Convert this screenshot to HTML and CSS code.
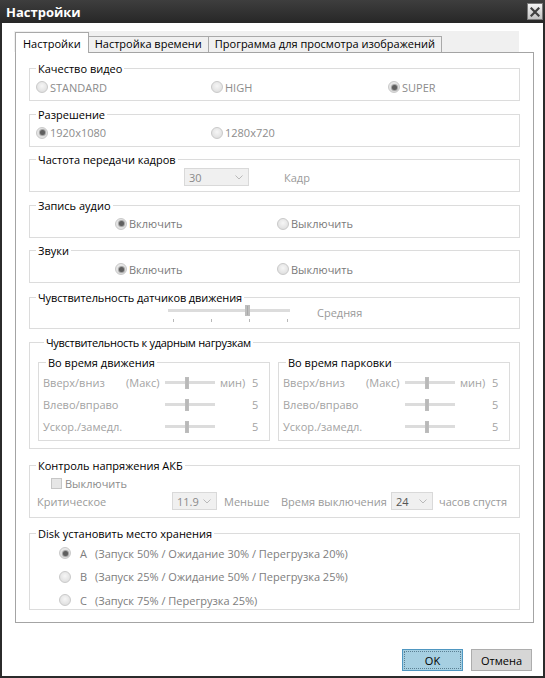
FILE: index.html
```html
<!DOCTYPE html>
<html lang="ru">
<head>
<meta charset="utf-8">
<title>Настройки</title>
<link rel="stylesheet" href="styles.css">
</head>
<body>
<div class="window">
  <div class="titlebar">
    <span class="title">Настройки</span>
    <span class="close"><svg width="10" height="10" viewBox="0 0 10 10"><path d="M1.5 1.5L8.5 8.5M8.5 1.5L1.5 8.5" stroke="#404040" stroke-width="2.2" stroke-linecap="square"/></svg></span>
  </div>
  <div class="client">
    <div class="tabstrip">
      <span class="tab active">Настройки</span>
      <span class="tab">Настройка времени</span>
      <span class="tab">Программа для просмотра изображений</span>
    </div>
    <div class="panel">
      <fieldset class="group">
        <legend>Качество видео</legend>
        <div class="row cols3">
          <span class="opt"><span class="radio"></span>STANDARD</span>
          <span class="opt"><span class="radio"></span>HIGH</span>
          <span class="opt"><span class="radio on"></span>SUPER</span>
        </div>
      </fieldset>
      <fieldset class="group">
        <legend>Разрешение</legend>
        <div class="row cols3">
          <span class="opt"><span class="radio on"></span>1920x1080</span>
          <span class="opt"><span class="radio"></span>1280x720</span>
        </div>
      </fieldset>
      <fieldset class="group g3">
        <legend>Частота передачи кадров</legend>
        <div class="row fps">
          <span class="select w65"><span>30</span><svg width="8" height="5" viewBox="0 0 8 5"><path d="M0.5 0.5L4 4L7.5 0.5" fill="none" stroke="#b9b9b9"/></svg></span>
          <span class="muted unit">Кадр</span>
        </div>
      </fieldset>
      <fieldset class="group">
        <legend>Запись аудио</legend>
        <div class="row cols2">
          <span class="opt dark"><span class="radio on"></span>Включить</span>
          <span class="opt dark"><span class="radio"></span>Выключить</span>
        </div>
      </fieldset>
      <fieldset class="group">
        <legend>Звуки</legend>
        <div class="row cols2">
          <span class="opt dark"><span class="radio on"></span>Включить</span>
          <span class="opt dark"><span class="radio"></span>Выключить</span>
        </div>
      </fieldset>
      <fieldset class="group g6">
        <legend class="tight1">Чувствительность датчиков движения</legend>
        <div class="sense">
          <div class="big-slider">
            <div class="track"></div>
            <div class="thumb big-thumb"></div>
            <div class="ticks"><i></i><i></i><i></i><i></i></div>
          </div>
          <span class="muted level">Средняя</span>
        </div>
      </fieldset>
      <fieldset class="group g7">
        <legend class="tight2">Чувствительность к ударным нагрузкам</legend>
        <div class="shock">
          <fieldset class="sub">
            <legend>Во время движения</legend>
            <div class="srow"><span>Вверх/вниз</span><span>(Макс)</span><span class="mini"><span class="track"></span><span class="thumb"></span></span><span>мин)</span><span>5</span></div>
            <div class="srow"><span>Влево/вправо</span><span></span><span class="mini"><span class="track"></span><span class="thumb"></span></span><span></span><span>5</span></div>
            <div class="srow"><span>Ускор./замедл.</span><span></span><span class="mini"><span class="track"></span><span class="thumb"></span></span><span></span><span>5</span></div>
          </fieldset>
          <fieldset class="sub">
            <legend>Во время парковки</legend>
            <div class="srow"><span>Вверх/вниз</span><span>(Макс)</span><span class="mini"><span class="track"></span><span class="thumb"></span></span><span>мин)</span><span>5</span></div>
            <div class="srow"><span>Влево/вправо</span><span></span><span class="mini"><span class="track"></span><span class="thumb"></span></span><span></span><span>5</span></div>
            <div class="srow"><span>Ускор./замедл.</span><span></span><span class="mini"><span class="track"></span><span class="thumb"></span></span><span></span><span>5</span></div>
          </fieldset>
        </div>
      </fieldset>
      <fieldset class="group g8">
        <legend>Контроль напряжения АКБ</legend>
        <div class="chkrow"><span class="check"></span><span class="opt">Выключить</span></div>
        <div class="batrow muted">
          <span>Критическое</span>
          <span class="select w45"><span>11.9</span><svg width="8" height="5" viewBox="0 0 8 5"><path d="M0.5 0.5L4 4L7.5 0.5" fill="none" stroke="#b9b9b9"/></svg></span>
          <span>Меньше</span>
          <span>Время выключения</span>
          <span class="select w42"><span class="dk">24</span><svg width="8" height="5" viewBox="0 0 8 5"><path d="M0.5 0.5L4 4L7.5 0.5" fill="none" stroke="#b9b9b9"/></svg></span>
          <span>часов спустя</span>
        </div>
      </fieldset>
      <fieldset class="group g9">
        <legend>Disk установить место хранения</legend>
        <div class="disk">
          <div class="drow"><span class="radio on"></span><span class="letter">A</span><span>(Запуск 50% / Ожидание 30% / Перегрузка 20%)</span></div>
          <div class="drow"><span class="radio"></span><span class="letter">B</span><span>(Запуск 25% / Ожидание 50% / Перегрузка 25%)</span></div>
          <div class="drow"><span class="radio"></span><span class="letter">C</span><span>(Запуск 75% / Перегрузка 25%)</span></div>
        </div>
      </fieldset>
    </div>
    <div class="buttons">
      <span class="btn primary">OK</span>
      <span class="btn">Отмена</span>
    </div>
  </div>
</div>
</body>
</html>
```

FILE: styles.css
```css
* { box-sizing: border-box; }
html, body { margin: 0; padding: 0; }
body {
  width: 545px;
  height: 678px;
  font-family: "Open Sans", "Noto Sans", sans-serif;
  font-size: 11px;
  color: #000;
  background: #fff;
  overflow: hidden;
}
.window {
  width: 545px;
  height: 678px;
  background: #2b2b2b;
  display: flex;
  flex-direction: column;
}
.titlebar {
  height: 23px;
  flex: none;
  display: flex;
  align-items: center;
  justify-content: space-between;
  padding: 0 2px 0 6px;
  background: linear-gradient(#3e3e3e, #272727);
}
.title {
  color: #fff;
  font-weight: 700;
  font-size: 13px;
  line-height: 16px;
}
.close {
  width: 16px;
  height: 17px;
  border: 1px solid #7a7a7a;
  background: linear-gradient(#f4f4f4, #c2c2c2);
  display: flex;
  align-items: center;
  justify-content: center;
}
.client {
  flex: 1;
  margin: 0 2px 2px 2px;
  background: #fff;
  display: flex;
  flex-direction: column;
}
.tabstrip {
  margin: 8px 0 0 12px;
  width: 505px;
  height: 21px;
  flex: none;
  background: #f0f0f0;
  display: flex;
  align-items: flex-end;
  padding-left: 1px;
}
.tab {
  height: 16px;
  line-height: 14px;
  padding: 0 6px;
  border: 1px solid #a9a9a9;
  border-bottom: none;
  background: #f0f0f0;
  margin-left: -1px;
  white-space: nowrap;
}
.tab:first-child { margin-left: 0; }
.tab.active {
  height: 21px;
  margin-bottom: -1px;
  padding: 4px 7px 0 7px;
  background: #fff;
  position: relative;
  z-index: 1;
}
.panel {
  margin-left: 13px;
  width: 519px;
  height: 571px;
  flex: none;
  border: 1px solid #a4a4a4;
  padding: 9px 13px 0 13px;
  display: flex;
  flex-direction: column;
  gap: 6.5px;
}
.group {
  margin: 0;
  padding: 4px 0 5px 0;
  border: 1px solid #dcdcdc;
  min-width: 0;
}
legend {
  padding: 0 2px;
  margin-left: 6px;
  line-height: 13px;
  font-size: 11px;
  color: #000;
}
legend.tight1 { letter-spacing: -0.1px; }
legend.tight2 { letter-spacing: -0.3px; }
.row {
  height: 16px;
  display: grid;
  align-items: center;
}
.cols3 {
  grid-template-columns: 175px 177px auto;
  padding-left: 6px;
}
.cols2 {
  grid-template-columns: 162px auto;
  padding-left: 85px;
}
.opt {
  display: flex;
  align-items: center;
  gap: 2px;
  color: #8c8c8c;
  white-space: nowrap;
}
.opt.dark { color: #7a7a7a; }
.muted { color: #9a9a9a; }
.radio {
  flex: none;
  width: 12px;
  height: 12px;
  border-radius: 50%;
  border: 1px solid #c9c9c9;
  background: radial-gradient(circle at 50% 40%, #f6f6f6, #d9d9d9);
  position: relative;
}
.radio.on::after {
  content: "";
  position: absolute;
  left: 2.5px;
  top: 2.5px;
  width: 5px;
  height: 5px;
  border-radius: 50%;
  background: #5f5f5f;
  box-shadow: 0 0 1px 1px #9a9a9a;
}
.g3 { padding: 2px 0 5px 0; }
.fps {
  height: 18px;
  display: flex;
  padding-left: 154px;
}
.select {
  height: 18px;
  display: flex;
  align-items: center;
  justify-content: space-between;
  border: 1px solid #d9d9d9;
  background: #f0f0f0;
  color: #8a8a8a;
  padding: 0 5px 0 4px;
  flex: none;
}
.select .dk { color: #555; }
.w65 { width: 65px; }
.w45 { width: 45px; }
.w42 { width: 42px; }
.unit { margin-left: 35px; }
.g6 { margin-top: 1.5px; padding: 0 0 4px 0; }
.sense {
  height: 20px;
  display: flex;
  align-items: flex-start;
  padding-left: 138px;
}
.big-slider {
  width: 122px;
  height: 20px;
  position: relative;
  display: flex;
  flex-direction: column;
}
.track {
  height: 3px;
  background: #dcdcdc;
}
.big-slider .track { margin-top: 5px; }
.thumb {
  position: absolute;
  width: 4px;
  height: 12px;
  background: linear-gradient(90deg, #c9c9c9, #a9a9a9 50%, #c9c9c9);
  border: 1px solid #bdbdbd;
}
.big-thumb { left: 77px; top: 1px; width: 5px; height: 11px; }
.ticks {
  margin-top: 7px;
  display: flex;
  justify-content: space-between;
  padding: 0 2px 0 5px;
}
.ticks i {
  width: 1px;
  height: 3px;
  background: #b8b8b8;
}
.level { margin-left: 27px; margin-top: 1px; line-height: 16px; }
.g7 { padding: 7px 9px 7px 8px; }
.shock {
  display: grid;
  grid-template-columns: 232px 232px;
  column-gap: 8px;
}
.sub {
  margin: 0;
  padding: 3px 0 2px 4px;
  border: 1px solid #dcdcdc;
  min-width: 0;
}
.sub legend { margin-left: 3px; }
.srow {
  height: 22px;
  display: grid;
  grid-template-columns: 83px 39px 55px 32px auto;
  align-items: center;
  color: #a3a3a3;
  white-space: nowrap;
}
.mini {
  position: relative;
  width: 50px;
  height: 12px;
  display: flex;
  align-items: center;
}
.mini .track { flex: 1; }
.mini .thumb { left: 20px; top: 0; }
.g8 { margin-top: 4px; padding: 3px 0 7px 0; }
.chkrow {
  height: 16px;
  display: flex;
  align-items: center;
  padding-left: 21px;
  gap: 3px;
}
.check {
  width: 11px;
  height: 11px;
  border: 1px solid #c6c6c6;
  background: #e6e6e6;
}
.batrow {
  margin-top: 1px;
  height: 18px;
  display: grid;
  grid-template-columns: 135px 52px 57px 110px 48px auto;
  align-items: center;
  padding-left: 7px;
  white-space: nowrap;
}
.g9 { margin-top: 2.5px; padding: 4px 0 0 0; }
.disk {
  display: flex;
  flex-direction: column;
  gap: 5.5px;
}
.drow {
  height: 18px;
  display: flex;
  align-items: center;
  padding-left: 29px;
  color: #7d7d7d;
  white-space: nowrap;
}
.letter { width: 15px; margin-left: 9px; }
.buttons {
  margin-top: 26px;
  display: flex;
  justify-content: flex-end;
  gap: 8px;
  padding-right: 11px;
}
.btn {
  width: 61px;
  height: 22px;
  display: flex;
  align-items: center;
  justify-content: center;
  border: 1px solid #adadad;
  background: #d6d6d6;
  color: #000;
  font-size: 11px;
}
.btn.primary {
  background: #a6cfe1;
  border-color: #4f97c1;
  outline: 1px dotted #5a7f92;
  outline-offset: -3px;
}
```
